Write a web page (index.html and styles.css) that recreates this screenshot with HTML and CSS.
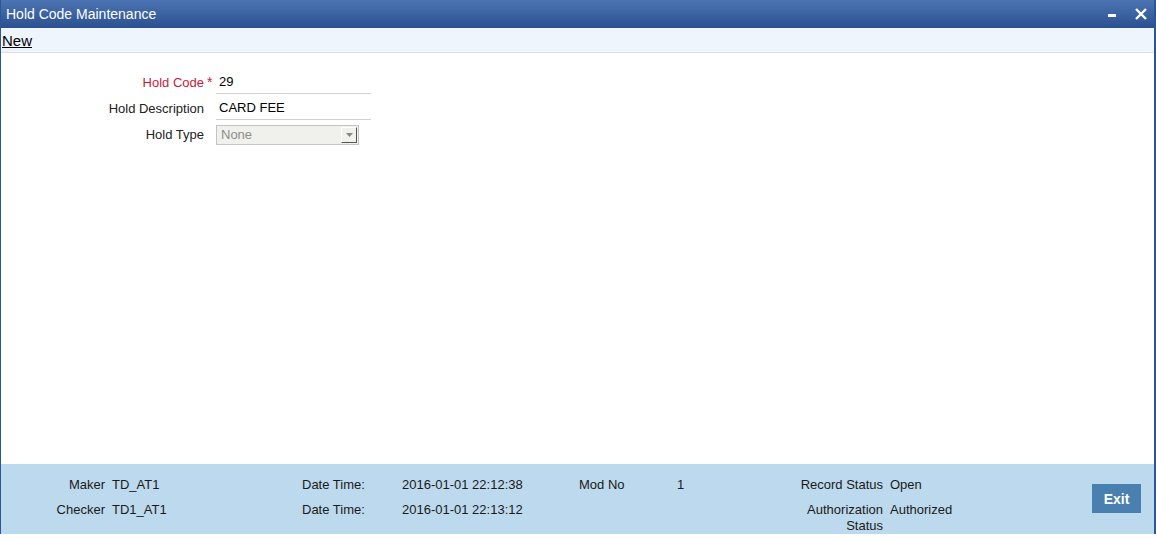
FILE: index.html
```html
<!DOCTYPE html>
<html lang="en">
<head>
  <meta charset="UTF-8" />
  <title>Hold Code Maintenance</title>
  <link rel="stylesheet" href="styles.css">
</head>
<body>
  <div id="window">
    <div class="titlebar">
      <span class="title">Hold Code Maintenance</span>
      <span class="controls">
        <svg class="ctl" width="12" height="12" viewBox="0 0 12 12"><rect x="2" y="6" width="8" height="3" fill="#fff"/></svg>
        <svg class="ctl" width="14" height="14" viewBox="0 0 14 14"><path d="M2 2 L12 12 M12 2 L2 12" stroke="#fff" stroke-width="2.4" fill="none"/></svg>
      </span>
    </div>
    <div class="toolbar"><a href="#" class="tool">New</a></div>

    <div class="main">
      <div class="form">
        <label class="lbl req">Hold Code</label><span class="star">*</span>
        <div class="field">29</div>

        <label class="lbl">Hold Description</label><span></span>
        <div class="field">CARD FEE</div>

        <label class="lbl">Hold Type</label><span></span>
        <div class="select"><span>None</span><span class="arrow"><svg width="7" height="4" viewBox="0 0 7 4"><path d="M0 0 H7 L3.5 4 Z" fill="#888"/></svg></span></div>
      </div>
    </div>

    <div class="footer">
      <span class="flbl">Maker</span><span>TD_AT1</span>
      <span>Date Time:</span><span>2016-01-01 22:12:38</span>
      <span>Mod No</span><span>1</span>
      <span class="flbl">Record Status</span><span>Open</span>
      <button class="exit">Exit</button>

      <span class="flbl">Checker</span><span>TD1_AT1</span>
      <span>Date Time:</span><span>2016-01-01 22:13:12</span>
      <span></span><span></span>
      <span class="flbl">Authorization Status</span><span>Authorized</span>
    </div>
  </div>
</body>
</html>
```

FILE: styles.css
```css
body {
  margin: 0;
  height: 541px;
  background: #fff;
  font-family: "Liberation Sans", Arial, sans-serif;
  font-size: 13px;
  color: #1a1a1a;
  overflow: hidden;
}
#window {
  height: 534px;
  display: flex;
  flex-direction: column;
  border-left: 1px solid #2d5592;
  border-right: 2px solid #2d5592;
  box-sizing: border-box;
}
.titlebar {
  height: 28px;
  flex: none;
  display: flex;
  align-items: center;
  justify-content: space-between;
  padding: 0 6px 0 5px;
  background: linear-gradient(#4c74b2, #2a5090);
  color: #fff;
  font-size: 14px;
}
.controls {
  display: flex;
  align-items: center;
  gap: 16px;
}
.ctl { display: block; }
.toolbar {
  height: 24px;
  flex: none;
  background: #eef5fd;
  border-bottom: 1px solid #dcdfe3;
  display: flex;
  align-items: center;
  padding-left: 1px;
}
.tool {
  color: #000;
  font-size: 15px;
  text-decoration: underline;
}
.main {
  flex: 1;
  padding-top: 18px;
}
.form {
  display: grid;
  grid-template-columns: 203px 12px 155px;
  grid-auto-rows: 23px;
  row-gap: 3px;
  align-items: center;
}
.lbl {
  text-align: right;
  color: #222;
}
.lbl.req { color: #c8193a; }
.star {
  color: #c8193a;
  font-size: 14px;
  padding-left: 3px;
  align-self: start;
  padding-top: 3px;
}
.field {
  height: 22px;
  line-height: 22px;
  border-bottom: 1px solid #d2d2d2;
  padding-left: 3px;
  color: #000;
}
.select {
  width: 143px;
  height: 20px;
  box-sizing: border-box;
  border: 1px solid #c4c4c0;
  background: #f0f0ec;
  color: #8c8c8c;
  display: flex;
  align-items: center;
  justify-content: space-between;
  padding-left: 4px;
}
.arrow {
  width: 16px;
  height: 16px;
  box-sizing: border-box;
  margin-right: 1px;
  border-top: 1px solid #fff;
  border-left: 1px solid #fff;
  border-right: 1px solid #555;
  border-bottom: 1px solid #555;
  background: #f0f0ec;
  display: flex;
  align-items: center;
  justify-content: center;
}
.footer {
  height: 70px;
  flex: none;
  box-sizing: border-box;
  background: #bdd9ed;
  padding-top: 13px;
  display: grid;
  grid-template-columns: 111px 190px 100px 177px 98px 100px 113px 202px 49px;
  grid-template-rows: 25px auto;
  align-items: start;
  line-height: 16px;
  color: #1a1a1a;
}
.flbl {
  text-align: right;
  padding-right: 7px;
}
.exit {
  grid-column: 9;
  grid-row: 1 / 3;
  margin-top: 7px;
  height: 29px;
  border: none;
  background: #4a80b0;
  color: #fff;
  font-family: "Liberation Sans", Arial, sans-serif;
  font-weight: bold;
  font-size: 14px;
  padding: 0;
}
```
